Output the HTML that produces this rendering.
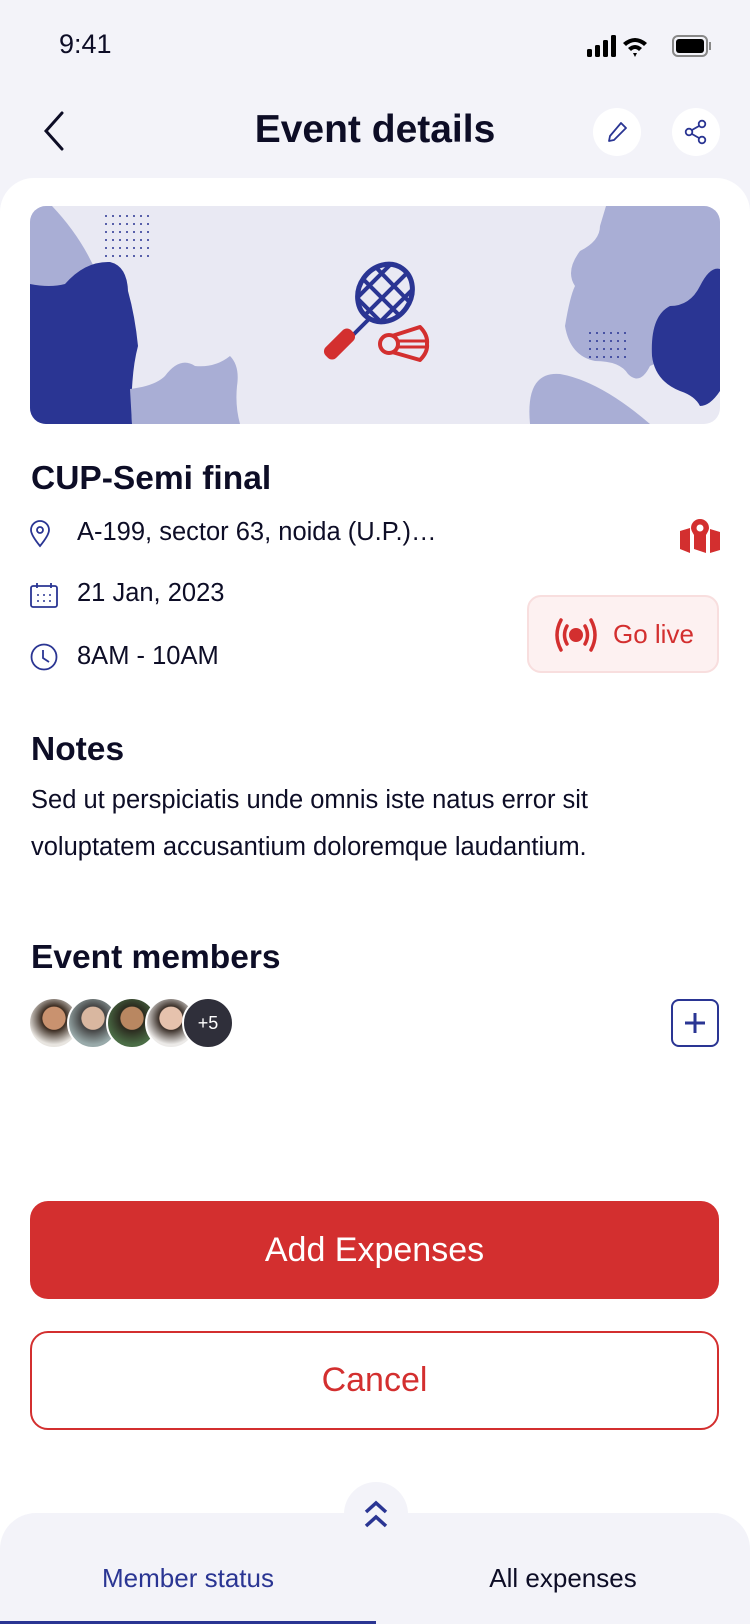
<!DOCTYPE html>
<html><head><meta charset="utf-8"><style>
*{margin:0;padding:0;box-sizing:border-box}
body{width:750px;height:1624px;background:#f3f3f9;font-family:"Liberation Sans",sans-serif;color:#0d0d26;position:relative;overflow:hidden}
.abs{position:absolute}
.card{position:absolute;left:0;top:178px;width:750px;height:1446px;background:#fff;border-radius:34px 34px 0 0}
.circ{position:absolute;width:48px;height:48px;border-radius:50%;background:#fff;display:flex;align-items:center;justify-content:center}
.row{position:absolute;left:77px;font-size:25.5px}
h2{position:absolute;left:31px;font-size:33.5px;font-weight:bold}
.av{position:absolute;top:997px;width:52px;height:52px;border-radius:50%;border:2px solid #fff}
</style></head><body>
<div class="abs" style="left:59px;top:29px;font-size:27px">9:41</div>
<svg class="abs" style="left:585px;top:34px" width="130" height="26" viewBox="0 0 130 26">
<rect x="2" y="15" width="5" height="8" rx="1.5" fill="#000"/><rect x="10" y="11" width="5" height="12" rx="1.5" fill="#000"/><rect x="18" y="6" width="5" height="17" rx="1.5" fill="#000"/><rect x="26" y="1" width="5" height="22" rx="1.5" fill="#000"/>
<path d="M38 9 Q50 -1 62 9 L59 12 Q50 4 41 12Z M43 14 Q50 8 57 14 L54 17 Q50 13 46 17Z M48 19 L52 19 L50 23Z" fill="#000"/>
<rect x="88" y="2" width="34" height="20" rx="5" fill="none" stroke="#888" stroke-width="2"/><rect x="91" y="5" width="28" height="14" rx="3" fill="#000"/><rect x="124" y="8" width="2" height="8" fill="#888"/>
</svg>
<svg class="abs" style="left:40px;top:110px" width="26" height="42"><path d="M22 3 L6 21 L22 39" fill="none" stroke="#0d0d26" stroke-width="3" stroke-linecap="round"/></svg>
<div class="abs" style="left:0;width:750px;text-align:center;top:108px;font-size:39px;font-weight:bold">Event details</div>
<div class="circ" style="left:593px;top:108px"><svg width="24" height="24" viewBox="0 0 24 24"><path d="M16 3 L21 8 L9 20 L4 21 L5 16 Z" fill="none" stroke="#2a3593" stroke-width="1.8" stroke-linejoin="round"/></svg></div>
<div class="circ" style="left:672px;top:108px"><svg width="26" height="26" viewBox="0 0 26 26"><circle cx="19" cy="5" r="3.3" fill="none" stroke="#2a3593" stroke-width="1.8"/><circle cx="6" cy="13" r="3.3" fill="none" stroke="#2a3593" stroke-width="1.8"/><circle cx="19" cy="21" r="3.3" fill="none" stroke="#2a3593" stroke-width="1.8"/><path d="M9 11 L16 7 M9 15 L16 19" stroke="#2a3593" stroke-width="1.8"/></svg></div>
<div class="card"></div>
<svg class="abs" style="left:30px;top:206px;border-radius:16px" width="690" height="218" viewBox="0 0 690 218">
<rect width="690" height="218" fill="#e9e9f3"/>
<path d="M0 0 L22 0 Q60 40 75 90 L90 150 L60 218 L0 218Z" fill="#a9aed5"/>
<path d="M0 78 Q20 82 35 78 Q55 55 80 56 Q97 60 98 85 Q105 110 108 140 Q100 170 102 218 L0 218Z" fill="#2a3593"/>
<path d="M100 183 Q125 180 135 170 Q150 150 165 160 Q185 162 200 150 Q210 160 207 180 Q205 200 210 218 L102 218Z" fill="#a9aed5"/>
<path d="M576 0 L690 0 L690 140 Q640 150 620 160 Q610 180 598 168 Q590 155 565 155 Q540 150 535 120 Q540 90 545 80 Q535 65 550 45 Q570 35 570 20Z" fill="#a9aed5"/>
<path d="M690 63 Q680 60 670 80 Q660 100 640 100 Q620 110 622 150 Q625 175 650 185 Q665 190 670 200 Q680 200 690 185Z" fill="#2a3593"/>
<path d="M500 218 Q495 165 530 168 Q570 175 620 218Z" fill="#a9aed5"/>
<g fill="#2a3593">
<g id="d"><circle cx="76" cy="10" r="1"/><circle cx="83" cy="10" r="1"/><circle cx="90" cy="10" r="1"/><circle cx="97" cy="10" r="1"/><circle cx="104" cy="10" r="1"/><circle cx="111" cy="10" r="1"/><circle cx="118" cy="10" r="1"/></g>
<use href="#d" y="8"/><use href="#d" y="16"/><use href="#d" y="24"/><use href="#d" y="32"/><use href="#d" y="40"/>
<g id="e"><circle cx="560" cy="127" r="1"/><circle cx="567" cy="127" r="1"/><circle cx="574" cy="127" r="1"/><circle cx="581" cy="127" r="1"/><circle cx="588" cy="127" r="1"/><circle cx="595" cy="127" r="1"/></g>
<use href="#e" y="8"/><use href="#e" y="16"/><use href="#e" y="24"/>
</g>
<g transform="translate(-30,-206)">
<ellipse cx="385" cy="293" rx="26" ry="30" transform="rotate(35 385 293)" fill="none" stroke="#2a3593" stroke-width="5"/>
<clipPath id="c"><ellipse cx="385" cy="293" rx="24" ry="28" transform="rotate(35 385 293)"/></clipPath>
<g clip-path="url(#c)" stroke="#2a3593" stroke-width="4"><path d="M342 283 L402 343 M352 268 L412 328 M364 255 L422 315 M377 243 L432 298 M342 313 L402 253 M352 328 L412 268 M364 338 L424 278 M377 348 L432 293"/></g>
<path d="M368 320 L352 336" stroke="#2a3593" stroke-width="4"/>
<rect x="332" y="326" width="15" height="36" rx="6" transform="rotate(45 339.5 344)" fill="#d32f2f"/>
<circle cx="389" cy="344" r="9" fill="none" stroke="#d32f2f" stroke-width="4"/>
<path d="M392 336 L420 327 Q428 335 427 344 Q428 352 420 360 L392 352" fill="none" stroke="#d32f2f" stroke-width="4" stroke-linejoin="round"/>
<path d="M398 341 L426 341 M398 347 L426 347" stroke="#d32f2f" stroke-width="3"/>
</g>
</svg>
<h2 style="top:460px">CUP-Semi final</h2>
<svg class="abs" style="left:30px;top:520px" width="20" height="28" viewBox="0 0 20 28"><path d="M10 26 Q1 15 1 10 A9 9 0 0 1 19 10 Q19 15 10 26Z" fill="none" stroke="#2a3593" stroke-width="1.8"/><circle cx="10" cy="10" r="3" fill="none" stroke="#2a3593" stroke-width="1.8"/></svg>
<div class="row" style="top:518px">A-199, sector 63, noida (U.P.)…</div>
<svg class="abs" style="left:680px;top:519px" width="40" height="34" viewBox="0 0 40 34"><path d="M0 12 L10 9 L10 34 L0 30Z M14 12 L20 22 L26 12 L26 34 L14 30Z M30 10 L40 13 L40 31 L30 34Z" fill="#d32f2f"/><path d="M20 24 Q11 13 11 9 A9 9 0 0 1 29 9 Q29 13 20 24Z" fill="#d32f2f"/><circle cx="20" cy="9" r="3.5" fill="#fff"/></svg>
<svg class="abs" style="left:30px;top:582px" width="28" height="26" viewBox="0 0 28 26"><rect x="1" y="4" width="26" height="21" rx="2" fill="none" stroke="#2a3593" stroke-width="1.8"/><path d="M7 1 V6 M21 1 V6" stroke="#2a3593" stroke-width="1.8"/><g fill="#2a3593"><circle cx="8" cy="13" r="1"/><circle cx="14" cy="13" r="1"/><circle cx="20" cy="13" r="1"/><circle cx="8" cy="19" r="1"/><circle cx="14" cy="19" r="1"/><circle cx="20" cy="19" r="1"/></g></svg>
<div class="row" style="top:579px">21 Jan, 2023</div>
<svg class="abs" style="left:30px;top:643px" width="28" height="28" viewBox="0 0 28 28"><circle cx="14" cy="14" r="12.5" fill="none" stroke="#2a3593" stroke-width="1.8"/><path d="M13 7 V15 L19 19" fill="none" stroke="#2a3593" stroke-width="1.8"/></svg>
<div class="row" style="top:642px">8AM - 10AM</div>
<div class="abs" style="left:527px;top:595px;width:192px;height:78px;background:#fdf1f1;border:2px solid #f8dede;border-radius:14px"></div>
<svg class="abs" style="left:553px;top:616px" width="46" height="38" viewBox="0 0 46 38"><circle cx="23" cy="19" r="7" fill="#d32f2f"/><path d="M14 10 Q9 19 14 28 M32 10 Q37 19 32 28 M8 4 Q0 19 8 34 M38 4 Q46 19 38 34" fill="none" stroke="#d32f2f" stroke-width="3.5" stroke-linecap="round"/></svg>
<div class="abs" style="left:613px;top:619px;font-size:26px;color:#d32f2f">Go live</div>
<h2 style="top:731px">Notes</h2>
<div class="abs" style="left:31px;top:777px;font-size:25.5px;line-height:47px;width:700px">Sed ut perspiciatis unde omnis iste natus error sit<br>voluptatem accusantium doloremque laudantium.</div>
<h2 style="top:939px">Event members</h2>
<div class="av" style="left:28px;background:radial-gradient(circle at 50% 40%,#c9926f 30%,#3a2b20 32%,#e8e5e0 70%)"></div>
<div class="av" style="left:67px;background:radial-gradient(circle at 50% 40%,#d9b7a0 30%,#444 32%,#9aa 70%)"></div>
<div class="av" style="left:106px;background:radial-gradient(circle at 50% 40%,#b98761 30%,#2b2b1f 32%,#4b6d46 70%)"></div>
<div class="av" style="left:145px;background:radial-gradient(circle at 50% 40%,#e6c2ad 30%,#3b3029 32%,#eceae8 70%)"></div>
<div class="av" style="left:182px;background:#2f2f3a;color:#fff;font-size:18px;display:flex;align-items:center;justify-content:center">+5</div>
<div class="abs" style="left:671px;top:999px;width:48px;height:48px;border:2px solid #2a3593;border-radius:8px"><svg width="44" height="44" viewBox="0 0 44 44"><path d="M22 12 V32 M12 22 H32" stroke="#2a3593" stroke-width="3"/></svg></div>
<div class="abs" style="left:30px;top:1201px;width:689px;height:98px;background:#d32f2f;border-radius:18px;color:#fff;font-size:34px;display:flex;align-items:center;justify-content:center">Add Expenses</div>
<div class="abs" style="left:30px;top:1331px;width:689px;height:99px;border:2px solid #d32f2f;border-radius:18px;color:#d32f2f;font-size:34px;display:flex;align-items:center;justify-content:center">Cancel</div>
<div class="abs" style="left:0;top:1513px;width:750px;height:111px;background:#f3f3f9;border-radius:36px 36px 0 0"></div>
<div class="abs" style="left:344px;top:1482px;width:64px;height:64px;border-radius:50%;background:#f3f3f9"></div>
<svg class="abs" style="left:363px;top:1500px" width="26" height="30" viewBox="0 0 26 30"><path d="M3 12 L13 3 L23 12 M3 26 L13 17 L23 26" fill="none" stroke="#2a3593" stroke-width="3.5"/></svg>
<div class="abs" style="left:0;width:376px;top:1563px;text-align:center;font-size:26px;color:#2a3593">Member status</div>
<div class="abs" style="left:376px;width:374px;top:1563px;text-align:center;font-size:26px">All expenses</div>
<div class="abs" style="left:0;top:1621px;width:376px;height:3px;background:#2a3593"></div>
</body></html>
